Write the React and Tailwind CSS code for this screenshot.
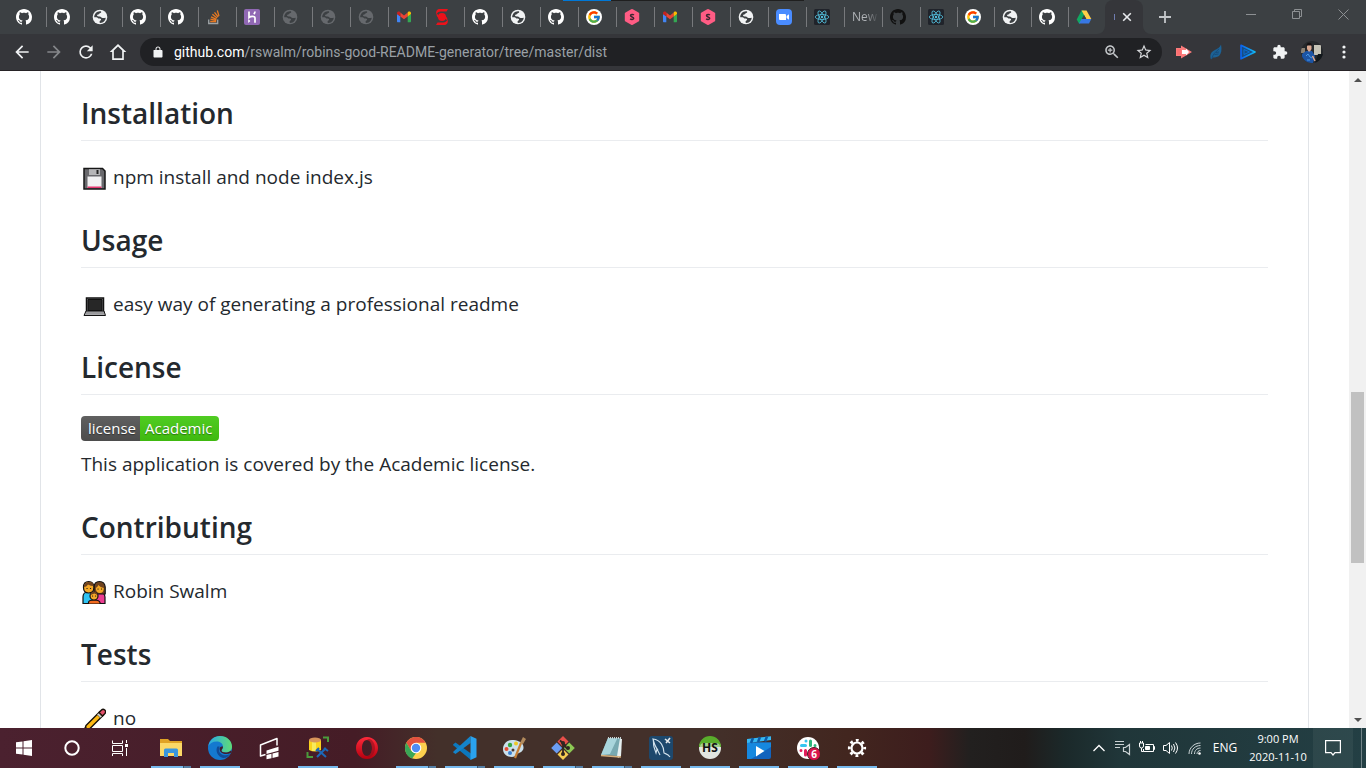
import React from "react";
import { FcGoogle } from "react-icons/fc";

const GH =
  "M8 0C3.58 0 0 3.58 0 8c0 3.54 2.29 6.53 5.47 7.59.4.07.55-.17.55-.38 0-.19-.01-.82-.01-1.49-2.01.37-2.53-.49-2.69-.94-.09-.23-.48-.94-.82-1.13-.28-.15-.68-.52-.01-.53.63-.01 1.08.58 1.23.82.72 1.21 1.87.87 2.33.66.07-.52.28-.87.51-1.07-1.78-.2-3.64-.89-3.64-3.95 0-.87.31-1.59.82-2.15-.08-.2-.36-1.02.08-2.12 0 0 .67-.21 2.2.82.64-.18 1.32-.27 2-.27.68 0 1.36.09 2 .27 1.53-1.04 2.2-.82 2.2-.82.44 1.1.16 1.92.08 2.12.51.56.82 1.27.82 2.15 0 3.07-1.87 3.75-3.65 3.95.29.25.54.73.54 1.48 0 1.07-.01 1.93-.01 2.2 0 .21.15.46.55.38A8.013 8.013 0 0016 8c0-4.42-3.58-8-8-8z";

const Github = ({ color = "#fff" }) => (
  <svg className="size-4" viewBox="0 0 16 16" fill={color}><path d={GH} /></svg>
);
const Globe = ({ color = "#f1f3f4" }) => (
  <svg className="size-4" viewBox="0 0 16 16">
    <circle cx="8" cy="8" r="7.3" fill={color} />
    <path fill="#3c4043" d="M2.200 8.200C2.200 5 4.600 2.300 8 2.200c1 0 1.400.4 1.200 1.100-.2.800-1.600.700-1.900 1.500-.3.900-2.200.600-2.300 1.700 0 .9 1.500.9 2.600.9 1.500 0 1.700 1.500 3 1.600 1.100.1 2-.300 3.100-.300-.1 2.700-2.300 5-5.200 5.200-1.200 0-1-1.100-.8-1.600.3-.8 1.400-.7 1.400-1.700 0-.8-1-1-1.900-1-1.300 0-1.500-1.300-2.700-1.400z" />
  </svg>
);
const StackOverflow = () => (
  <svg className="size-4" viewBox="0 0 16 16" fill="none" strokeWidth="1.3">
    <path stroke="#9ea3a6" d="M2.700 10.500v4h9v-4" />
    <path stroke="#e87922" d="M4.200 12.500h6M4.400 10.200l5.900 1.200M5 7.800l5.500 2.500M6.400 5.300l4.700 3.700M8.500 3.300l3.700 4.700M11.300 1.500l1.700 5.500" />
  </svg>
);
const Heroku = () => (
  <svg className="size-4" viewBox="0 0 16 16">
    <rect width="16" height="16" rx="2" fill="#9068b4" />
    <path d="M5 2.500v6c1.500-1.200 6-2 6 .6v4.600M11 2.500c0 1.200-.5 2-1.200 2.700" stroke="#fff" strokeWidth="1.700" fill="none" />
    <path d="M4.200 10v4l2.200-2z" fill="#fff" />
  </svg>
);
const Gmail = () => (
  <svg className="size-4" viewBox="0 0 16 16">
    <path fill="#4285f4" d="M1 5v7.300c0 .6.400 1 1 1h2.300V7.200z" />
    <path fill="#34a853" d="M15 5v7.300c0 .6-.4 1-1 1h-2.300V7.200z" />
    <path fill="#ea4335" d="M4.300 3.600 8 6.400l3.700-2.800v3.800L8 10.200 4.300 7.400z" />
    <path fill="#c5221f" d="M1 4.300c0-1.600 1.800-2.200 3-1.200l.3.300v4L1 5z" />
    <path fill="#fbbc04" d="M15 4.300c0-1.600-1.800-2.200-3-1.200l-.3.300v4L15 5z" />
  </svg>
);
const Scotia = () => (
  <svg className="size-4" viewBox="0 0 16 16" fill="#ec111a">
    <path d="M5 0h9l-1.500 2.600H6.800C4.600 2.600 3.200 3.800 2.600 5.500 1.500 3 2.600.3 5 0zM11 16H2l1.500-2.600h5.700c2.200 0 3.600-1.200 4.200-2.900 1.100 2.500 0 5.200-2.400 5.500z" />
    <circle cx="8" cy="8" r="4" />
    <path d="M2.600 4.500 5.500 7v2.500C3.500 8.500 2.300 7 2.600 4.500zM13.400 11.500 10.500 9V6.500c2 1 3.200 2.500 2.900 5z" />
  </svg>
);
const Google = () => (
  <span className="flex size-4 items-center justify-center rounded-full bg-white"><FcGoogle className="size-3.5" /></span>
);
const Hex = () => (
  <svg className="size-4" viewBox="0 0 16 16">
    <path d="M7.200.3q.8-.4 1.600 0l5.700 3.100q.7.400.7 1.200v6.800q0 .8-.7 1.200l-5.700 3.100q-.8.400-1.600 0l-5.700-3.100q-.7-.4-.7-1.200V4.600q0-.8.700-1.200z" fill="#ff5c84" />
    <path d="M9.800 6.100C9.200 5.200 6.500 5.100 6.500 6.600c0 1.600 3.200 1.100 3.200 2.700 0 1.500-2.700 1.400-3.500.5" fill="none" stroke="#3b2630" strokeWidth="1.500" />
  </svg>
);
const Zoom = () => (
  <svg className="size-4" viewBox="0 0 16 16">
    <rect width="16" height="16" rx="4" fill="#4a8cff" />
    <path fill="#fff" d="M3 5h5.700c.8 0 1.300.5 1.300 1.300V11H4.300C3.500 11 3 10.500 3 9.700zM10.600 7 13 5.200v5.600L10.600 9z" />
  </svg>
);
const ReactIcon = () => (
  <svg className="size-4" viewBox="0 0 16 16" fill="none" stroke="#53c1de" strokeWidth=".8">
    <rect width="16" height="16" rx="1.500" fill="#20232a" stroke="none" />
    <ellipse cx="8" cy="8" rx="6.800" ry="2.500" />
    <ellipse cx="8" cy="8" rx="6.800" ry="2.500" transform="rotate(60 8 8)" />
    <ellipse cx="8" cy="8" rx="6.800" ry="2.500" transform="rotate(120 8 8)" />
    <circle cx="8" cy="8" r="1.200" fill="#53c1de" stroke="none" />
  </svg>
);
const Drive = () => (
  <svg className="size-4" viewBox="0 0 16 16">
    <path fill="#11a861" d="M5.500 1.500H8L10.500 6 4 14.500H3L.7 10.500z" />
    <path fill="#ffcf48" d="M5.500 1.500h5l4.800 8.500h-5z" />
    <path fill="#3c4043" d="M8 5.800 10.300 10H5.700z" />
    <path fill="#3777e3" d="M5.500 10h9.800L13 14.500H3z" />
  </svg>
);

const tabs = [
  ["GitHub", <Github />], ["Site", <Globe />], ["GitHub", <Github />], ["GitHub", <Github />],
  ["Stack Overflow", <StackOverflow />], ["Heroku", <Heroku />], ["Site", <Globe color="#66696d" />],
  ["Site", <Globe color="#66696d" />], ["Site", <Globe color="#66696d" />], ["Gmail", <Gmail />],
  ["Bank", <Scotia />], ["GitHub", <Github />], ["Site", <Globe />], ["GitHub", <Github />],
  ["Google", <Google />], ["Course", <Hex />], ["Gmail", <Gmail />], ["Course", <Hex />],
  ["Site", <Globe />], ["Zoom", <Zoom />], ["React", <ReactIcon />],
  ["New Tab", <span className="block bg-linear-to-r from-[#b4b7bb] from-50% to-[#4c5053] bg-clip-text text-[12px] leading-4 text-transparent">New</span>],
  ["GitHub", <Github color="#111" />],
];
const lateTabs = [["React", <ReactIcon />], ["Google", <Google />], ["Site", <Globe />], ["GitHub", <Github />], ["Drive", <Drive />]];

const Mat = ({ d, className = "size-5", fill = "#f1f3f4" }) => (
  <svg className={className} viewBox="0 0 24 24" fill={fill} fillRule="evenodd"><path d={d} /></svg>
);
const ToolButton = ({ label, children }) => (
  <button aria-label={label} className="flex h-7 w-8 shrink-0 items-center justify-center">{children}</button>
);

function TabStrip() {
  return (
    <header className="relative flex h-[34px] shrink-0 bg-[#3c4043]">
      <div className="absolute top-0 left-[563px] h-px w-12 bg-[#0078d7]" />
      <div className="absolute top-0 left-[611px] h-px w-[193px] bg-[#1f1f1f]" />
      <button aria-label="GitHub" className="flex w-[46px] shrink-0 items-center pl-4"><Github /></button>
      {tabs.map(([label, icon], i) => (
        <div key={i} className="flex w-[38px] shrink-0 items-center">
          <span className="h-5 w-px bg-[#77797c]" />
          <button aria-label={label} className="flex h-full flex-1 items-center pl-[7px]">{icon}</button>
        </div>
      ))}
      {lateTabs.map(([label, icon], i) => (
        <div key={i} className="flex w-[37px] shrink-0 items-center">
          <span className="h-5 w-px bg-[#77797c]" />
          <button aria-label={label} className="flex h-full flex-1 items-center pl-[7px]">{icon}</button>
        </div>
      ))}
      <div className="relative flex w-[38px] shrink-0 items-center rounded-t-lg bg-[#35363a] pl-[9px]">
        <svg className="absolute bottom-0 -left-2 size-2" viewBox="0 0 8 8" fill="#35363a"><path d="M8 0v8H0a8 8 0 0 0 8-8z" /></svg>
        <svg className="absolute -right-2 bottom-0 size-2" viewBox="0 0 8 8" fill="#35363a"><path d="M0 0v8h8a8 8 0 0 1-8-8z" /></svg>
        <span className="h-[6px] w-px bg-[#6f7cb0]" />
        <button aria-label="Close tab" className="ml-[7px]">
          <svg className="size-[10px]" viewBox="0 0 10 10" stroke="#e8eaed" strokeWidth="1.600"><path d="m1.200 1.200 7.600 7.600M8.800 1.200 1.200 8.800" /></svg>
        </button>
      </div>
      <button aria-label="New tab" className="flex w-11 items-center justify-center">
        <svg className="size-3" viewBox="0 0 12 12" stroke="#c3c6c9" strokeWidth="1.800"><path d="M6 0v12M0 6h12" /></svg>
      </button>
      <div className="ml-auto flex h-7">
        <button aria-label="Minimize" className="flex w-[46px] items-center justify-center">
          <svg className="size-[11px]" viewBox="0 0 11 11" stroke="#8d9093"><path d="M0 5.500h10" /></svg>
        </button>
        <button aria-label="Restore" className="flex w-[46px] items-center justify-center">
          <svg className="size-[11px]" viewBox="0 0 11 11" stroke="#8d9093" fill="none"><path d="M.5 2.500h7v7h-7zM2.500 2.500v-2h7v7h-2" /></svg>
        </button>
        <button aria-label="Close" className="flex w-[46px] items-center justify-center">
          <svg className="size-[11px]" viewBox="0 0 11 11" stroke="#8d9093"><path d="m.5.5 10 10M10.500.5l-10 10" /></svg>
        </button>
      </div>
    </header>
  );
}

function Toolbar() {
  return (
    <div className="flex h-[37px] shrink-0 items-center border-b border-[#272326] bg-[#35363a] px-1.5">
      <ToolButton label="Back"><Mat d="M20 11H7.830l5.590-5.590L12 4l-8 8 8 8 1.410-1.410L7.830 13H20v-2z" /></ToolButton>
      <ToolButton label="Forward"><Mat fill="#85878a" d="M12 4l-1.410 1.410L16.170 11H4v2h12.170l-5.580 5.590L12 20l8-8z" /></ToolButton>
      <ToolButton label="Reload"><Mat d="M17.650 6.350A7.958 7.958 0 0 0 12 4a8 8 0 1 0 7.730 10h-2.080A5.990 5.990 0 0 1 12 18c-3.310 0-6-2.690-6-6s2.690-6 6-6c1.660 0 3.140.690 4.220 1.780L13 11h7V4l-2.350 2.350z" /></ToolButton>
      <ToolButton label="Home"><Mat d="M12 2.500 2 12h3v9.500h14V12h3zM12 5.300l5 4.800v9.300H7v-9.300z" /></ToolButton>
      <div className="ml-1.5 flex h-7 min-w-0 flex-1 items-center rounded-full bg-[#202124] pr-0.5 pl-3 font-[Roboto,sans-serif] text-[14px] leading-5">
        <Mat className="size-3 shrink-0" d="M18 8h-1V6c0-2.760-2.240-5-5-5S7 3.240 7 6v2H4c-1 0-1 .9-1 2v11c0 1.100.9 2 2 2h14c1.100 0 2-.9 2-2V10c0-1.100-.9-2-2-2zM9 6c0-1.660 1.340-3 3-3s3 1.340 3 3v2H9z" />
        <label htmlFor="address" className="pl-2.5 text-white">github.com</label>
        <input id="address" className="min-w-0 flex-1 bg-transparent text-[#9aa0a6] outline-none" defaultValue="/rswalm/robins-good-README-generator/tree/master/dist" />
        <ToolButton label="Zoom"><Mat className="size-[18px]" fill="#c4c7ca" d="M15.500 14h-.790l-.280-.270C15.410 12.590 16 11.110 16 9.500 16 5.910 13.090 3 9.500 3S3 5.910 3 9.500 5.910 16 9.500 16c1.610 0 3.090-.590 4.230-1.570l.270.280v.790l5 4.990L20.490 19l-4.990-5zm-6 0C7.010 14 5 11.990 5 9.500S7.010 5 9.500 5 14 7.010 14 9.500 11.990 14 9.500 14zm.8-7.500H8.700v2.200H6.500v1.600h2.200v2.200h1.600v-2.200h2.200V8.700h-2.200z" /></ToolButton>
        <ToolButton label="Bookmark"><Mat className="size-[18px]" fill="#d5d7da" d="M22 9.240l-7.190-.620L12 2 9.190 8.630 2 9.240l5.460 4.730L5.820 21 12 17.270 18.180 21l-1.630-7.030L22 9.240zM12 15.400l-3.760 2.270 1-4.280-3.320-2.880 4.380-.380L12 6.100l1.710 4.040 4.380.380-3.320 2.880 1 4.280L12 15.400z" /></ToolButton>
      </div>
      <div className="ml-1.5 flex">
        <ToolButton label="Screen recorder">
          <svg className="size-4" viewBox="0 0 16 16"><path d="M0 4h5V1.500L16 8 5 14.500V12H0z" fill="#fb7b7b" /><path d="M6 6h4V4.500L13 8l-3 3.500V10H6z" fill="#fff" /><path d="M1 6h4M1 8h4M1 10h4" stroke="#ff5a60" strokeWidth=".7" /></svg>
        </ToolButton>
        <ToolButton label="Feather">
          <svg className="size-4" viewBox="0 0 16 16"><path d="M3 15.500C1.500 11 3 8 6 6.500 9.500 5 12 3.500 13 .5c1 5 .5 9-2 11.500-2 1.500-4.500 1.500-6 1.500z" fill="#1c6296" /><path d="M4 14.500c.5-4 3.500-6.500 7-9.500M6.500 10.500l4-.5M8 8.500l3-.5" stroke="#164a77" strokeWidth=".9" fill="none" /></svg>
        </ToolButton>
        <ToolButton label="Player">
          <svg className="size-4" viewBox="0 0 16 16"><defs><linearGradient id="play"><stop stopColor="#0b62f0" /><stop offset="1" stopColor="#12b9f2" /></linearGradient></defs><path d="M1 1.200 15 8 1 14.800z" fill="#164d86" stroke="url(#play)" strokeWidth="1.600" strokeLinejoin="round" /><path d="m4 5.500 5.500 2.500L4 10.500z" fill="none" stroke="#0c6fd0" strokeWidth="1" /></svg>
        </ToolButton>
        <ToolButton label="Extensions"><Mat className="size-4" d="M20.500 11H19V7c0-1.100-.9-2-2-2h-4V3.500a2.500 2.500 0 0 0-5 0V5H4c-1.100 0-1.990.9-1.990 2v3.800H3.500c1.490 0 2.700 1.210 2.700 2.700s-1.210 2.700-2.700 2.700H2V20c0 1.100.9 2 2 2h3.800v-1.500c0-1.490 1.210-2.700 2.700-2.700 1.490 0 2.700 1.210 2.700 2.700V22H17c1.100 0 2-.9 2-2v-4h1.500a2.500 2.500 0 0 0 0-5z" /></ToolButton>
        <ToolButton label="Profile">
          <svg className="size-[22px]" viewBox="0 0 22 22">
            <clipPath id="face"><circle cx="11" cy="11" r="11" /></clipPath>
            <g clipPath="url(#face)"><path fill="#25282b" d="M0 0h22v22H0z" /><path fill="#c5c3b6" d="M13 4h7v10h-7z" /><path fill="#12181c" d="M17 13h5v9h-8z" /><path fill="#8c8173" d="M0 7h4v5H0z" /><path fill="#1d55a5" d="m1 13 4-3 6 0 3 5-2 7H1z" /><path fill="#d9a891" d="M6 4.500h4.500V8L9 10.500H7.500L6 8z" /><path fill="#171214" d="M5.500 5c-.5-4.500 6-4.500 5.500 0l-1-1H7z" /><path d="m5 15 2-2 2 3 2 1M6 19h3" stroke="#4b9ae8" fill="none" /><path d="M11.500 15 14 20" stroke="#d9a891" strokeWidth="1.500" /></g>
          </svg>
        </ToolButton>
        <ToolButton label="Menu"><svg className="h-4 w-1" viewBox="0 0 4 16" fill="#f1f3f4"><circle cx="2" cy="3" r="1.600" /><circle cx="2" cy="8" r="1.600" /><circle cx="2" cy="13" r="1.600" /></svg></ToolButton>
      </div>
    </div>
  );
}

const Floppy = () => (
  <svg className="mx-px size-6" viewBox="0 0 24 24">
    <path d="M2 2.500h18.500L23 5v18H2z" fill="#69696d" stroke="#161616" strokeWidth="1.500" />
    <path d="M5.500 10.500h14v11.500h-14z" fill="#f1f1f2" /><path d="M5.500 20.500h14V22h-14z" fill="#e5366f" />
    <path d="M7 3.200h11v5.800H7z" fill="#b5b5b7" /><path d="M14.500 4h2v4h-2z" fill="#242424" />
  </svg>
);
const Laptop = () => (
  <svg className="mx-px size-6" viewBox="0 0 24 24" stroke="#111" strokeWidth="1">
    <path d="M4.500 5h17v14h-17z" fill="#8e8e91" strokeWidth="1.500" /><path d="M6 6.500h14v11H6z" fill="#272727" />
    <path d="M4 18h18l1.500 4.500H2z" fill="#a9a9ac" /><path d="M4 20h18" stroke="#8a8a8c" />
  </svg>
);
const Family = () => (
  <svg className="mx-px size-6" viewBox="1 1 24 24" stroke="#111" strokeWidth="1.200">
    <path d="M2 24.500V18q0-5 5-5t5 5v6.500z" fill="#2fc3f2" /><path d="M13.500 24.500V18q0-5 5-5t5.500 5v6.500z" fill="#ec3d91" />
    <path d="M13 15V8q.3-5.500 5.500-5.500T24.200 8v7z" fill="#70431f" />
    <path d="M2.500 8.500q0-6 5.200-6t5.200 6q0 5.500-5.200 5.500t-5.200-5.500z" fill="#f5a928" /><path d="M2.800 8q0-5 5-5t4.800 4Q10 7 7 5.500 5.500 8 2.800 8z" fill="#70431f" stroke="none" />
    <path d="M14.800 9q2-1 2.500-3 2 2.500 5.500 3 0 5-4 5t-4-5z" fill="#f5a928" stroke="none" />
    <path d="M7.500 25v-1.500q0-2.500 5.500-2.500t6 2.500V25z" fill="#f26a1e" /><circle cx="13" cy="17" r="4" fill="#f5a928" /><path d="M9.500 16q.5-3.500 3.500-3.500t3.500 3.500l-3-1.500z" fill="#70431f" stroke="none" />
    <path d="M6 9.500h.1M9.500 9.500h.1M17 10h.1M20.500 10h.1M11.500 17h.1M14.500 17h.1" strokeLinecap="round" />
  </svg>
);
const Pencil = () => (
  <svg className="mx-px size-6" viewBox="0 1 24 24" stroke="#171008" strokeWidth="1.400" strokeLinejoin="round">
    <path d="M2.500 24.500 4 19.500 18 5.500l3.500 3.500L7.500 23z" fill="#fcb813" /><path d="m17 6.500 2.500-2.500q1.500-1.500 3.300 0 1.700 1.700.2 3.500L20.500 10z" fill="#e4516c" />
    <path d="m16.500 7 3.500 3.500-1.500 1.500-3.500-3.500z" fill="#d7d7d9" strokeWidth=".5" /><path d="m2.500 24.500 1-3 2 2z" fill="#171008" />
  </svg>
);

const Section = ({ title, children }) => (
  <section className="mb-[29px]">
    <h2 className="mb-[21px] border-b border-[#eaecef] pb-2 text-[28px] leading-[38px] font-semibold">{title}</h2>
    {children}
  </section>
);
const Line = ({ icon, children }) => (
  <p className="flex h-[30px] items-center gap-1.5 text-[19px] leading-[30px]">
    {icon && <span className="pt-0.5">{icon}</span>}
    <span>{children}</span>
  </p>
);

function Page() {
  return (
    <div className="flex min-h-0 flex-1 bg-white">
      <main className="min-w-0 flex-1 overflow-hidden px-10">
        <article className="border-x border-[#e1e4e8] px-10 pt-[23px] text-[#24292e]">
          <Section title="Installation"><Line icon={<Floppy />}>npm install and node index.js</Line></Section>
          <Section title="Usage"><Line icon={<Laptop />}>easy way of generating a professional readme</Line></Section>
          <Section title="License">
            <a href="#license" className="mb-2 flex h-[25px] w-fit overflow-hidden rounded-[4px] text-[15px] leading-[25px] text-white [text-shadow:0_1px_1px_#0006]">
              <span className="w-[59px] bg-linear-to-b from-[#606060] to-[#4c4c4c] pl-[7px]">license</span>
              <span className="w-[79px] bg-linear-to-b from-[#50cc22] to-[#3fb90f] pl-[5px]">Academic</span>
            </a>
            <Line>This application is covered by the Academic license.</Line>
          </Section>
          <Section title="Contributing"><Line icon={<Family />}>Robin Swalm</Line></Section>
          <Section title="Tests"><Line icon={<Pencil />}>no</Line></Section>
        </article>
      </main>
      <div className="flex w-[17px] shrink-0 flex-col items-center bg-[#f1f1f1]">
        <button aria-label="Scroll up" className="flex h-[17px] items-center"><svg className="size-2" viewBox="0 0 8 8" fill="#505050"><path d="m4 2 4 4H0z" /></svg></button>
        <div className="grow-[304]" />
        <div className="w-[13px] grow-[171] bg-[#c1c1c1]" />
        <div className="grow-[148]" />
        <button aria-label="Scroll down" className="flex h-[17px] items-center"><svg className="size-2" viewBox="0 0 8 8" fill="#505050"><path d="M4 6 0 2h8z" /></svg></button>
      </div>
    </div>
  );
}

const I = ({ children, v = 24 }) => <svg className="size-6" viewBox={`0 0 ${v} ${v}`}>{children}</svg>;

const apps = [
  ["File Explorer", "split", <I><path fill="#e0a325" d="M1 3h8l2 2h12v4H1z" /><path fill="#fbd867" d="M1 7h22v13H1z" /><path fill="#3a96dd" d="M5 21v-7q0-1.500 1.500-1.500h11Q19 12.500 19 14v7h-4v-4H9v4z" /></I>],
  ["Edge", "one", <I><defs><linearGradient id="e1"><stop stopColor="#2aa9e6" /><stop offset="1" stopColor="#60dc75" /></linearGradient></defs><circle cx="12" cy="12" r="12" fill="#1479cf" /><path fill="url(#e1)" d="M.3 10C1.500 4 6 0 12 0c7 0 12 5 12 10.500 0 4-3 6-6.500 6-3 0-4-1-4-2s1.500-1.500 1.500-4C15 7.500 12 5.500 8.500 5.500 5 5.500 1.700 7.500.3 10z" /><path fill="#114b96" d="M9.500 10.500C7 14 9.500 21 15 22c3 .3 5.500-1.500 7-4-5 3-10.500.5-11-3.500-.1-2 .5-3 .5-4z" /><path fill="#431d28" d="M15 10.500c0 2.500-1.500 3-1.500 4s1.500 2 4 2c2 0 4-.6 5.200-1.800l.9.300-.8 2c-5 2.500-11 .5-11.200-4 0-1.700 1-3 3.400-2.500z" /></I>],
  ["Files", "", <I><path d="M8.500 18.500 3.500 20V9l16.500-6.500v7" fill="none" stroke="#fff" strokeWidth="1.500" strokeLinejoin="round" /><path fill="#fff" d="m9.500 14.500 12-3.700v4L9.500 18zM9.500 19l5-1.300v4.500l-5 1zM15.500 17.500l6-1.600v4.500l-6 1.500z" /></I>],
  ["Database tool", "one", <I><path fill="#fbd21c" d="M3 4h12v10q-6 3-12 0z" /><path fill="#f7ea5c" d="M6 5h4v10H6z" /><ellipse cx="9" cy="4" rx="6" ry="2.500" fill="#d8955a" /><path d="M17 1.500h5V6M1.500 16v5H7" stroke="#4b9b3c" strokeWidth="2" fill="none" /><path d="m11 13 9 8M20 12l-9 9M10 15l3-3M18 12l4 3" stroke="#1c68b8" strokeWidth="2" /></I>],
  ["Opera", "", <I><defs><linearGradient id="op" x2="0" y2="1"><stop stopColor="#ff2a3b" /><stop offset="1" stopColor="#b5000f" /></linearGradient></defs><path fillRule="evenodd" fill="url(#op)" d="M12 1C5.500 1 1 6 1 12s4.500 11 11 11 11-5 11-11S18.500 1 12 1zm0 3c3 0 5 3.500 5 8s-2 8-5 8-5-3.500-5-8 2-8 5-8z" /><path d="M12 4c3-3 8 2 8 8s-5 11-8 8c6-1 7-13 0-16z" fill="#8d101c" opacity=".6" /></I>],
  ["Chrome", "split", <I><circle cx="12" cy="12" r="11" fill="#fdd04e" /><path fill="#e2523f" d="M12 1c4 0 7.700 2 9.500 5.800H12L7 15 2.400 6.700C4.300 3.500 7.500 1 12 1z" /><path fill="#3aa757" d="M2.400 6.700 7.200 14.900 12 17l-3.800 5.400C3.700 21 1 17 1 12c0-2 .5-3.800 1.400-5.300z" /><circle cx="12" cy="12" r="5.300" fill="#fff" /><circle cx="12" cy="12" r="4.200" fill="#4e8df5" /></I>],
  ["VS Code", "split", <I><path fill="#0c78bd" d="m0 8.500 2.500-2L18 17.500V24L.5 9.500z" /><path fill="#1484cb" d="M.5 15.500 17.500 0v7L2.500 18 0 16.300z" /><path fill="#2aa2ee" d="m17.500 0 6 2.700v18.600l-6 2.700z" /></I>],
  ["Paint", "one", <I><path fill="#cbe0eb" d="M10 4c-6 0-9 5-9 9 0 5 4 8 9 8 4 0 4-3 7-4 5-2 5-5 4-8S15 4 10 4z" /><circle cx="8" cy="9" r="2.200" fill="#36a642" /><circle cx="14" cy="7.500" r="2" fill="#efc923" /><circle cx="4.500" cy="13" r="2" fill="#e44b32" /><circle cx="8" cy="17" r="2" fill="#397fd3" /><circle cx="11" cy="14" r="1.500" fill="#4b352d" /><path d="m13 22 6-15" stroke="#c77f35" strokeWidth="2.200" /><path d="m18 7 3-6 3 2-3 5z" fill="#b28a5c" /></I>],
  ["Git", "split", <I><path fill="#e94f4a" d="m12 0 5.500 5.500L12 11 6.500 5.500z" /><path fill="#6b9df4" d="m5.700 6.500 5.500 5.500-5.500 5.500L.2 12z" /><path fill="#8dc954" d="m18.300 6.500 5.500 5.500-5.500 5.500-5.500-5.500z" /><path fill="#f6cd52" d="m12 13 5.500 5.500L12 24l-5.500-5.500z" /><path d="M9 4.500 15 10M12 7v11M12 9l5 4" stroke="#302521" strokeWidth="1.800" /><g fill="#302521"><circle cx="12" cy="7" r="2" /><circle cx="17" cy="12" r="2" /><circle cx="12" cy="18" r="2" /></g></I>],
  ["Notepad", "split", <I><path fill="#e5eff0" d="m10 2 12 1-1 17-3 2z" /><path fill="#78a9b1" d="M8 2h12l-3 18-16-1z" /><path fill="#a9d5dc" d="m8 2 9 1-7 15-9 1z" /><path d="m1 19.500 16 1.200 4 .3" stroke="#d7b07c" strokeWidth="1.500" fill="none" /><path d="M8 2h13" stroke="#c5d3d5" strokeDasharray="1 1" strokeWidth="2" /></I>],
  ["MySQL Workbench", "one", <I><rect width="24" height="24" rx="3" fill="#1d486d" /><path d="M21 21c-2-3-4-3-6-4 0-6-3-13-11-14 1 3 0 5 1 8l2 6 1-4 3 6M9 14c-3-3-4-7-5-11" fill="none" stroke="#d3e3ee" strokeWidth="1.100" /><path d="m16 3 5 4M21 2l-4 5" stroke="#e6e9eb" strokeWidth="1.600" /></I>],
  ["HeidiSQL", "one", <I><circle cx="12" cy="12" r="11" fill="#e2e5e0" /><path d="M1 11a11 11 0 0 1 22 0z" fill="#59ad2b" /><rect x="2" y="7" width="20" height="10" rx="4" fill="#e4eadf" opacity=".55" /><text x="12" y="16" textAnchor="middle" fontSize="12" fontWeight="700" fill="#111">HS</text></I>],
  ["Movies", "one", <I><path fill="#1263bd" d="M0 6.500h24V21q0 2-2 2H2q-2 0-2-2z" /><path fill="#1688df" d="M0 6.500h24V11L4 23H0z" /><path fill="#36b8f3" d="m0 3 24-2.800V4L0 7z" /><path d="m4 7 2-5M11 6l2-5M18 5.500l2-5" stroke="#0c5ba7" strokeWidth="2.500" /><path fill="#fff" d="m9 10 8.500 5L9 20.500z" /></I>],
  ["Slack", "one", <I><circle cx="12" cy="12" r="11" fill="#fff" /><g strokeLinecap="round" strokeWidth="3"><path d="M5.500 9.500h4M10 5v.1" stroke="#36c5f0" /><path d="M14.500 5v4.500M19 9.500v.1" stroke="#2eb67d" /><path d="M9.500 14.500V19M5 14.500v.1" stroke="#e01e5a" /></g><circle cx="18" cy="18" r="6.500" fill="#d9144d" stroke="#4b1723" /><text x="18" y="22" textAnchor="middle" fontSize="10" fontWeight="700" fill="#fff">6</text></I>],
  ["Settings", "one", <I><g fill="none" stroke="#fff"><circle cx="12" cy="12" r="5.500" strokeWidth="2.200" /><circle cx="12" cy="12" r="7.700" strokeWidth="2.800" strokeDasharray="2.800 3.248" strokeDashoffset="1.400" /></g></I>],
];

function Taskbar() {
  return (
    <footer className="flex h-10 shrink-0 [background:linear-gradient(90deg,#4b212f_0%,#451c26_26%,#43302a_32%,#43302a_52%,#42261f_62%,#3d1d1d_68%,#22201f_71%,#201c1b_75%,#1b292a_78%,#203639_82%,#233f44_100%)]">
      <button aria-label="Start" className="flex w-12 items-center justify-center"><svg className="size-4" viewBox="0 0 16 16" fill="#fff"><path d="M0 2.300 6.500 1.400v6.100H0zM7.500 1.200 16 0v7.500H7.500zM0 8.500h6.500v6.100L0 13.700zM7.500 8.500H16V16l-8.500-1.200z" /></svg></button>
      <button aria-label="Cortana" className="flex w-12 items-center justify-center"><svg className="size-4" viewBox="0 0 16 16"><circle cx="8" cy="8" r="6.700" fill="none" stroke="#fff" strokeWidth="2" /></svg></button>
      <button aria-label="Task View" className="flex w-12 items-center justify-center"><svg className="size-4" viewBox="0 0 16 16" fill="none" stroke="#fff"><path d="M.5.5v3h10v-3M.5 5.500h10v6H.5zM.5 16v-2.500h10V16M14.500 0v3M14.500 8v8" /><path d="M14.500 4v3" strokeWidth="3" /></svg></button>
      <nav className="ml-[3px] flex gap-px">
        {apps.map(([label, state, icon]) => (
          <button key={label} aria-label={label} className="flex w-12 flex-col items-center pt-2">
            {icon}
            <span className="mt-auto flex h-0.5 w-10">
              {state && <span className="flex-1 bg-[#76b9ed]" />}
              {state === "split" && <span className="w-2 border-l border-[#39566d] bg-[#557fa5]" />}
            </span>
          </button>
        ))}
      </nav>
      <div className="ml-auto flex items-center text-[12px] text-white">
        <button aria-label="Show hidden icons" className="flex w-6 justify-center"><svg className="h-2 w-3" viewBox="0 0 12 8" fill="none" stroke="#fff" strokeWidth="1.300"><path d="m.5 7 5.500-5.500L11.500 7" /></svg></button>
        <button aria-label="Audio output" className="flex w-6 justify-center"><svg className="size-4" viewBox="0 0 16 16" fill="none" stroke="#c9d1d3" strokeWidth="1.200"><path d="M0 1.500h9M0 4.500h9M0 7.500h5M8.500 7.500h2l4-3v10l-4-3h-2z" /></svg></button>
        <button aria-label="Battery" className="flex w-6 justify-center"><svg className="size-4" viewBox="0 0 16 16" fill="none" stroke="#fff"><path d="M6.500 4.500h8v7h-10V9M14.500 6.500h1v3h-1M.5 3v3q0 2 2 2t2-2V3zM1.500 3V1M3.500 3V1M2.500 8v3.500h2" /><path d="M6.500 6.500h4v3h-4z" fill="#fff" /></svg></button>
        <button aria-label="Volume" className="flex w-6 justify-center"><svg className="size-4" viewBox="0 0 16 16" fill="none" stroke="#fff"><path d="M.5 5.500H3l3.500-3v11L3 10.500H.5zM8.500 5.500q1.500 2.500 0 5M10.500 4q2.800 4 0 8M12.500 2.500q4 5.500 0 11" /></svg></button>
        <button aria-label="Network" className="flex w-6 justify-center"><svg className="size-4" viewBox="0 0 16 16" fill="none" stroke="#cbd4d6"><path d="M2 14C2 8 7 3 13.500 3M4.500 14c0-5 4-8.500 9-8.500M7.500 14c0-3.500 2.500-6 6-6M10 14c0-2 1.500-3.500 3.500-3.500" /><circle cx="12.500" cy="13.500" r="1.300" fill="#fff" stroke="none" /></svg></button>
        <span className="w-9 text-center">ENG</span>
        <span className="w-[70px] text-center text-[11px] leading-[18px] whitespace-nowrap">9:00 PM<br />2020-11-10</span>
        <button aria-label="Notifications" className="flex h-full w-10 items-center justify-center bg-white/5"><svg className="size-4" viewBox="0 0 16 16" fill="none" stroke="#fff" strokeWidth="1.200"><path d="M.6.600h14.800v12H10l-2 2.400-2-2.400H.6z" /></svg></button>
        <button aria-label="Show desktop" className="ml-2 h-full w-[5px] border-l border-[#718387]" />
      </div>
    </footer>
  );
}

export default function App() {
  return (
    <div className="flex h-screen flex-col overflow-hidden font-['Open_Sans','Noto_Sans',sans-serif]">
      <TabStrip />
      <Toolbar />
      <Page />
      <Taskbar />
    </div>
  );
}
